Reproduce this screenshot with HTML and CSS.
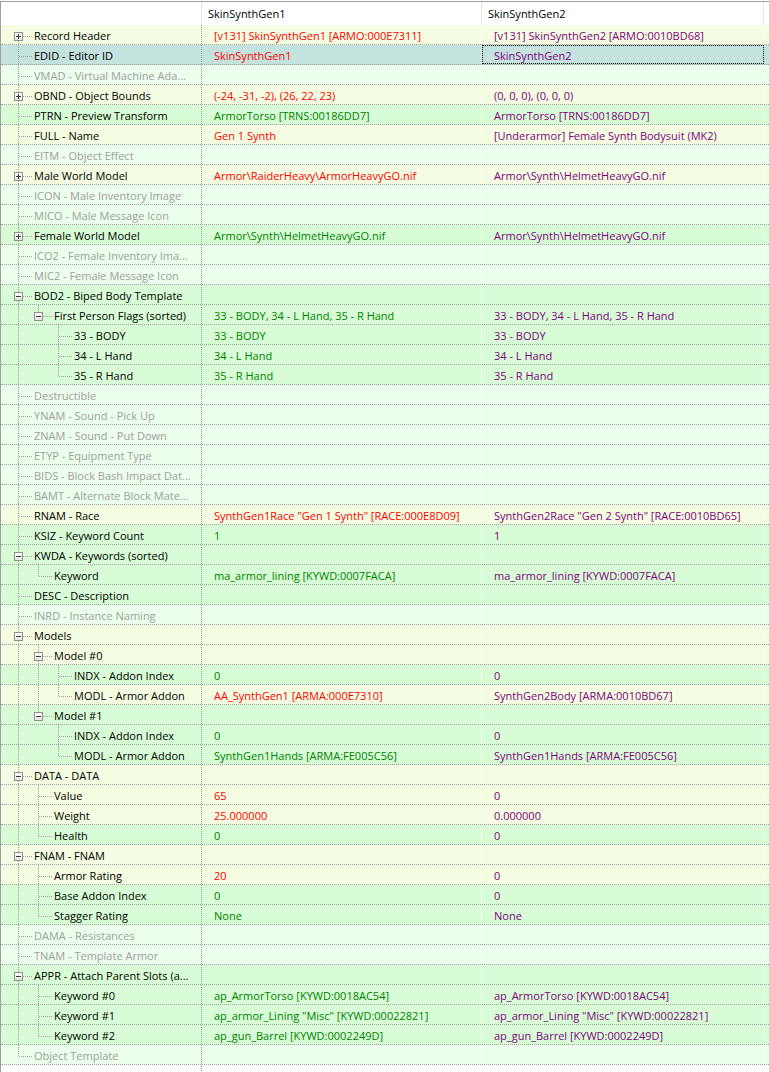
FILE: index.html
```html
<!DOCTYPE html>
<html lang="en">
<head>
    <meta charset="UTF-8">
    <meta name="viewport" content="width=device-width, initial-scale=1.0">
    <title>SkinSynthGen1 vs SkinSynthGen2</title>
    <link rel="stylesheet" href="styles.css">
</head>
<body>

    <div class="tree">
        <div class="head">
            <div class="h1"></div>
            <div class="h2">SkinSynthGen1</div>
            <div class="h3">SkinSynthGen2</div>
            <div class="hx"></div>
        </div>

        <div class="row y">
            <div class="c1"><i class="f"><b class="plus"></b></i><span class="lbl">Record Header</span></div>
            <div class="c2 r">[v131] SkinSynthGen1 [ARMO:000E7311]</div>
            <div class="c3">[v131] SkinSynthGen2 [ARMO:0010BD68]</div>
        </div>
        <div class="row s">
            <div class="c1"><i class="t"></i><span class="lbl">EDID - Editor ID</span></div>
            <div class="c2 r">SkinSynthGen1</div>
            <div class="c3 focus">SkinSynthGen2</div>
        </div>
        <div class="row e">
            <div class="c1 off"><i class="t"></i><span class="lbl">VMAD - Virtual Machine Ada...</span></div>
            <div class="c2"></div>
            <div class="c3"></div>
        </div>
        <div class="row y">
            <div class="c1"><i class="t"><b class="plus"></b></i><span class="lbl">OBND - Object Bounds</span></div>
            <div class="c2 r">(-24, -31, -2), (26, 22, 23)</div>
            <div class="c3">(0, 0, 0), (0, 0, 0)</div>
        </div>
        <div class="row g">
            <div class="c1"><i class="t"></i><span class="lbl">PTRN - Preview Transform</span></div>
            <div class="c2 n">ArmorTorso [TRNS:00186DD7]</div>
            <div class="c3">ArmorTorso [TRNS:00186DD7]</div>
        </div>
        <div class="row y">
            <div class="c1"><i class="t"></i><span class="lbl">FULL - Name</span></div>
            <div class="c2 r">Gen 1 Synth</div>
            <div class="c3">[Underarmor] Female Synth Bodysuit (MK2)</div>
        </div>
        <div class="row e">
            <div class="c1 off"><i class="t"></i><span class="lbl">EITM - Object Effect</span></div>
            <div class="c2"></div>
            <div class="c3"></div>
        </div>
        <div class="row y">
            <div class="c1"><i class="t"><b class="plus"></b></i><span class="lbl">Male World Model</span></div>
            <div class="c2 r">Armor\RaiderHeavy\ArmorHeavyGO.nif</div>
            <div class="c3">Armor\Synth\HelmetHeavyGO.nif</div>
        </div>
        <div class="row e">
            <div class="c1 off"><i class="t"></i><span class="lbl">ICON - Male Inventory Image</span></div>
            <div class="c2"></div>
            <div class="c3"></div>
        </div>
        <div class="row e">
            <div class="c1 off"><i class="t"></i><span class="lbl">MICO - Male Message Icon</span></div>
            <div class="c2"></div>
            <div class="c3"></div>
        </div>
        <div class="row g">
            <div class="c1"><i class="t"><b class="plus"></b></i><span class="lbl">Female World Model</span></div>
            <div class="c2 n">Armor\Synth\HelmetHeavyGO.nif</div>
            <div class="c3">Armor\Synth\HelmetHeavyGO.nif</div>
        </div>
        <div class="row e">
            <div class="c1 off"><i class="t"></i><span class="lbl">ICO2 - Female Inventory Ima...</span></div>
            <div class="c2"></div>
            <div class="c3"></div>
        </div>
        <div class="row e">
            <div class="c1 off"><i class="t"></i><span class="lbl">MIC2 - Female Message Icon</span></div>
            <div class="c2"></div>
            <div class="c3"></div>
        </div>
        <div class="row g">
            <div class="c1"><i class="t"><b></b></i><span class="lbl">BOD2 - Biped Body Template</span></div>
            <div class="c2"></div>
            <div class="c3"></div>
        </div>
        <div class="row g">
            <div class="c1"><i class="v"></i><i class="l"><b></b></i><span class="lbl">First Person Flags (sorted)</span></div>
            <div class="c2 n">33 - BODY, 34 - L Hand, 35 - R Hand</div>
            <div class="c3">33 - BODY, 34 - L Hand, 35 - R Hand</div>
        </div>
        <div class="row g">
            <div class="c1"><i class="v"></i><i></i><i class="t"></i><span class="lbl">33 - BODY</span></div>
            <div class="c2 n">33 - BODY</div>
            <div class="c3">33 - BODY</div>
        </div>
        <div class="row g">
            <div class="c1"><i class="v"></i><i></i><i class="t"></i><span class="lbl">34 - L Hand</span></div>
            <div class="c2 n">34 - L Hand</div>
            <div class="c3">34 - L Hand</div>
        </div>
        <div class="row g">
            <div class="c1"><i class="v"></i><i></i><i class="l"></i><span class="lbl">35 - R Hand</span></div>
            <div class="c2 n">35 - R Hand</div>
            <div class="c3">35 - R Hand</div>
        </div>
        <div class="row e">
            <div class="c1 off"><i class="t"></i><span class="lbl">Destructible</span></div>
            <div class="c2"></div>
            <div class="c3"></div>
        </div>
        <div class="row e">
            <div class="c1 off"><i class="t"></i><span class="lbl">YNAM - Sound - Pick Up</span></div>
            <div class="c2"></div>
            <div class="c3"></div>
        </div>
        <div class="row e">
            <div class="c1 off"><i class="t"></i><span class="lbl">ZNAM - Sound - Put Down</span></div>
            <div class="c2"></div>
            <div class="c3"></div>
        </div>
        <div class="row e">
            <div class="c1 off"><i class="t"></i><span class="lbl">ETYP - Equipment Type</span></div>
            <div class="c2"></div>
            <div class="c3"></div>
        </div>
        <div class="row e">
            <div class="c1 off"><i class="t"></i><span class="lbl">BIDS - Block Bash Impact Dat...</span></div>
            <div class="c2"></div>
            <div class="c3"></div>
        </div>
        <div class="row e">
            <div class="c1 off"><i class="t"></i><span class="lbl">BAMT - Alternate Block Mate...</span></div>
            <div class="c2"></div>
            <div class="c3"></div>
        </div>
        <div class="row y">
            <div class="c1"><i class="t"></i><span class="lbl">RNAM - Race</span></div>
            <div class="c2 r">SynthGen1Race "Gen 1 Synth" [RACE:000E8D09]</div>
            <div class="c3">SynthGen2Race "Gen 2 Synth" [RACE:0010BD65]</div>
        </div>
        <div class="row g">
            <div class="c1"><i class="t"></i><span class="lbl">KSIZ - Keyword Count</span></div>
            <div class="c2 n">1</div>
            <div class="c3">1</div>
        </div>
        <div class="row g">
            <div class="c1"><i class="t"><b></b></i><span class="lbl">KWDA - Keywords (sorted)</span></div>
            <div class="c2"></div>
            <div class="c3"></div>
        </div>
        <div class="row g">
            <div class="c1"><i class="v"></i><i class="l"></i><span class="lbl">Keyword</span></div>
            <div class="c2 n">ma_armor_lining [KYWD:0007FACA]</div>
            <div class="c3">ma_armor_lining [KYWD:0007FACA]</div>
        </div>
        <div class="row g">
            <div class="c1"><i class="t"></i><span class="lbl">DESC - Description</span></div>
            <div class="c2"></div>
            <div class="c3"></div>
        </div>
        <div class="row e">
            <div class="c1 off"><i class="t"></i><span class="lbl">INRD - Instance Naming</span></div>
            <div class="c2"></div>
            <div class="c3"></div>
        </div>
        <div class="row y">
            <div class="c1"><i class="t"><b></b></i><span class="lbl">Models</span></div>
            <div class="c2"></div>
            <div class="c3"></div>
        </div>
        <div class="row y">
            <div class="c1"><i class="v"></i><i class="t"><b></b></i><span class="lbl">Model #0</span></div>
            <div class="c2"></div>
            <div class="c3"></div>
        </div>
        <div class="row g">
            <div class="c1"><i class="v"></i><i class="v"></i><i class="t"></i><span class="lbl">INDX - Addon Index</span></div>
            <div class="c2 n">0</div>
            <div class="c3">0</div>
        </div>
        <div class="row y">
            <div class="c1"><i class="v"></i><i class="v"></i><i class="l"></i><span class="lbl">MODL - Armor Addon</span></div>
            <div class="c2 r">AA_SynthGen1 [ARMA:000E7310]</div>
            <div class="c3">SynthGen2Body [ARMA:0010BD67]</div>
        </div>
        <div class="row g">
            <div class="c1"><i class="v"></i><i class="l"><b></b></i><span class="lbl">Model #1</span></div>
            <div class="c2"></div>
            <div class="c3"></div>
        </div>
        <div class="row g">
            <div class="c1"><i class="v"></i><i></i><i class="t"></i><span class="lbl">INDX - Addon Index</span></div>
            <div class="c2 n">0</div>
            <div class="c3">0</div>
        </div>
        <div class="row g">
            <div class="c1"><i class="v"></i><i></i><i class="l"></i><span class="lbl">MODL - Armor Addon</span></div>
            <div class="c2 n">SynthGen1Hands [ARMA:FE005C56]</div>
            <div class="c3">SynthGen1Hands [ARMA:FE005C56]</div>
        </div>
        <div class="row y">
            <div class="c1"><i class="t"><b></b></i><span class="lbl">DATA - DATA</span></div>
            <div class="c2"></div>
            <div class="c3"></div>
        </div>
        <div class="row y">
            <div class="c1"><i class="v"></i><i class="t"></i><span class="lbl">Value</span></div>
            <div class="c2 r">65</div>
            <div class="c3">0</div>
        </div>
        <div class="row y">
            <div class="c1"><i class="v"></i><i class="t"></i><span class="lbl">Weight</span></div>
            <div class="c2 r">25.000000</div>
            <div class="c3">0.000000</div>
        </div>
        <div class="row g">
            <div class="c1"><i class="v"></i><i class="l"></i><span class="lbl">Health</span></div>
            <div class="c2 n">0</div>
            <div class="c3">0</div>
        </div>
        <div class="row y">
            <div class="c1"><i class="t"><b></b></i><span class="lbl">FNAM - FNAM</span></div>
            <div class="c2"></div>
            <div class="c3"></div>
        </div>
        <div class="row y">
            <div class="c1"><i class="v"></i><i class="t"></i><span class="lbl">Armor Rating</span></div>
            <div class="c2 r">20</div>
            <div class="c3">0</div>
        </div>
        <div class="row g">
            <div class="c1"><i class="v"></i><i class="t"></i><span class="lbl">Base Addon Index</span></div>
            <div class="c2 n">0</div>
            <div class="c3">0</div>
        </div>
        <div class="row g">
            <div class="c1"><i class="v"></i><i class="l"></i><span class="lbl">Stagger Rating</span></div>
            <div class="c2 n">None</div>
            <div class="c3">None</div>
        </div>
        <div class="row e">
            <div class="c1 off"><i class="t"></i><span class="lbl">DAMA - Resistances</span></div>
            <div class="c2"></div>
            <div class="c3"></div>
        </div>
        <div class="row e">
            <div class="c1 off"><i class="t"></i><span class="lbl">TNAM - Template Armor</span></div>
            <div class="c2"></div>
            <div class="c3"></div>
        </div>
        <div class="row g">
            <div class="c1"><i class="t"><b></b></i><span class="lbl">APPR - Attach Parent Slots (a...</span></div>
            <div class="c2"></div>
            <div class="c3"></div>
        </div>
        <div class="row g">
            <div class="c1"><i class="v"></i><i class="t"></i><span class="lbl">Keyword #0</span></div>
            <div class="c2 n">ap_ArmorTorso [KYWD:0018AC54]</div>
            <div class="c3">ap_ArmorTorso [KYWD:0018AC54]</div>
        </div>
        <div class="row g">
            <div class="c1"><i class="v"></i><i class="t"></i><span class="lbl">Keyword #1</span></div>
            <div class="c2 n">ap_armor_Lining "Misc" [KYWD:00022821]</div>
            <div class="c3">ap_armor_Lining "Misc" [KYWD:00022821]</div>
        </div>
        <div class="row g">
            <div class="c1"><i class="v"></i><i class="l"></i><span class="lbl">Keyword #2</span></div>
            <div class="c2 n">ap_gun_Barrel [KYWD:0002249D]</div>
            <div class="c3">ap_gun_Barrel [KYWD:0002249D]</div>
        </div>
        <div class="row e">
            <div class="c1 off"><i class="l"></i><span class="lbl">Object Template</span></div>
            <div class="c2"></div>
            <div class="c3"></div>
        </div>
        <div class="tail">
            <div class="c1"></div>
            <div class="c2"></div>
            <div class="c3"></div>
        </div>
    </div>

</body>
</html>
```

FILE: styles.css
```css
* {
    margin: 0;
    padding: 0;
    box-sizing: border-box;
}
body {
    font-family: 'Open Sans', 'Segoe UI', sans-serif;
    font-size: 11px;
    color: #000;
    background-color: #fff;
    height: 1072px;
    overflow: hidden;
}
.tree {
    margin-top: 1px;
    border-top: 1px solid #a0a0a0;
    border-left: 1px solid #a0a0a0;
}
.head, .row, .tail {
    display: grid;
    grid-template-columns: 201px 280px 282px 1fr;
}
.head {
    height: 23px;
    line-height: 23px;
    background-color: #fff;
}
.head div {
    padding-left: 6px;
    border-right: 1px solid #e5e5e5;
    white-space: nowrap;
}
.head .hx {
    border-right: none;
}
.row {
    height: 20px;
    border-bottom: 1px dotted #a0a0a0;
}
.row > div {
    line-height: 19px;
    padding-top: 1px;
    white-space: nowrap;
    overflow: hidden;
}
.c1 {
    display: flex;
    padding-left: 7px;
    border-right: 1px dotted #a0a0a0;
}
.c2, .c3 {
    padding-left: 12px;
    border-right: 1px dotted #fff;
}
.tail {
    height: 8px;
}
.tail .c1 {
    border-right: 1px dotted #a0a0a0;
}

/* row colours */
.y { background-color: #f4fde1; }
.g { background-color: #d8fdd6; }
.e { background-color: #ecfeec; }
.s { background-color: #c5e3de; }

/* value colours */
.r { color: #ff0000; }
.n { color: #008000; }
.c3 { color: #800080; }
.off { color: #a0a0a0; }

.focus {
    outline: 1px dotted #000;
    outline-offset: -1px;
}

/* tree lines */
.c1 i {
    position: relative;
    flex: none;
    width: 20px;
    margin-top: -1px;
    height: 19px;
}
.c1 i.v::before,
.c1 i.t::before,
.c1 i.l::before,
.c1 i.f::before {
    content: '';
    position: absolute;
    left: 10px;
    top: 0;
    bottom: 0;
    border-left: 1px dotted #a0a0a0;
}
.c1 i.l::before {
    bottom: auto;
    height: 11px;
}
.c1 i.f::before {
    top: 11px;
}
.c1 i.t::after,
.c1 i.l::after,
.c1 i.f::after {
    content: '';
    position: absolute;
    left: 11px;
    top: 11px;
    width: 13px;
    border-top: 1px dotted #a0a0a0;
}
.lbl {
    margin-left: 6px;
}

/* expander boxes */
.c1 b {
    position: absolute;
    z-index: 1;
    left: 6px;
    top: 7px;
    width: 9px;
    height: 9px;
    border: 1px solid #919191;
    background: linear-gradient(#ffffff, #e4e4e4);
}
.c1 b::before {
    content: '';
    position: absolute;
    left: 1px;
    top: 3px;
    width: 5px;
    height: 1px;
    background-color: #3a3a3a;
}
.c1 b.plus::after {
    content: '';
    position: absolute;
    left: 3px;
    top: 1px;
    width: 1px;
    height: 5px;
    background-color: #3a3a3a;
}
```
